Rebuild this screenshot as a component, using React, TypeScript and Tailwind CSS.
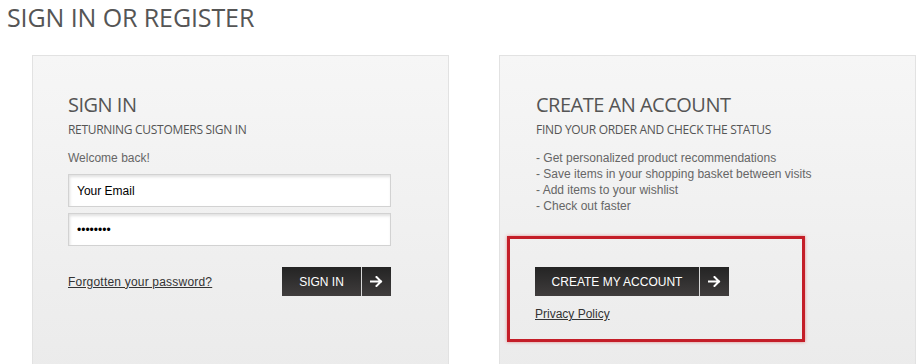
const BENEFITS = [
  "Get personalized product recommendations",
  "Save items in your shopping basket between visits",
  "Add items to your wishlist",
  "Check out faster",
];

function Arrow() {
  return (
    <svg className="w-[13px] h-[11px]" viewBox="0 0 13 11" fill="none">
      <path
        d="M1 5.5h10M6.5 1l4.5 4.5L6.5 10"
        stroke="white"
        strokeWidth={2}
        strokeLinecap="square"
      />
    </svg>
  );
}

function DarkButton({ label, width }: { label: string; width: string }) {
  return (
    <button
      className={`flex h-[29px] items-stretch bg-gradient-to-b from-[#242424] to-[#403d3d] text-white ${width}`}
    >
      <span className="flex flex-1 items-center justify-center text-[12px] font-['Liberation_Sans',Arial,sans-serif]">
        {label}
      </span>
      <span className="w-px bg-[#d8d8d8]" />
      <span className="flex w-[29px] items-center justify-center">
        <Arrow />
      </span>
    </button>
  );
}

function Field({ value }: { value: string }) {
  return (
    <div className="h-[33px] w-[323px] border border-[#d2d2d2] bg-white pl-[8px] flex items-center shadow-[inset_1px_2px_3px_rgba(0,0,0,0.12)] text-[12px] text-black font-['Liberation_Sans',Arial,sans-serif]">
      {value}
    </div>
  );
}

export default function App() {
  return (
    <div className="min-h-screen h-[364px] overflow-hidden bg-white font-['Open_Sans',sans-serif]">
      <h1 className="pl-[7px] pt-[2px] text-[25px] leading-[30px] tracking-[-0.1px] text-[#555]">
        SIGN IN OR REGISTER
      </h1>

      <div className="mt-[23px] flex gap-[50px] pl-[32px]">
        {/* Sign in */}
        <section className="h-[320px] w-[417px] border border-[#e2e2e2] bg-gradient-to-b from-[#f6f6f6] to-[#ebebeb] pl-[35px] pt-[36px]">
          <h2 className="text-[20px] leading-[26px] tracking-[-0.5px] text-[#555]">SIGN IN</h2>
          <p className="mt-[4px] text-[12px] leading-[16px] tracking-[-0.3px] text-[#555]">
            RETURNING CUSTOMERS SIGN IN
          </p>
          <p className="mt-[12px] text-[12px] leading-[16px] text-[#666] font-['Liberation_Sans',Arial,sans-serif]">
            Welcome back!
          </p>
          <div className="mt-[8px] flex flex-col gap-[6px]">
            <Field value="Your Email" />
            <Field value="••••••••" />
          </div>
          <div className="mt-[21px] flex w-[323px] items-center justify-between">
            <a className="text-[12px] tracking-[0.2px] text-[#333] underline font-['Liberation_Sans',Arial,sans-serif]">
              Forgotten your password?
            </a>
            <DarkButton label="SIGN IN" width="w-[109px]" />
          </div>
        </section>

        {/* Create account */}
        <section className="h-[320px] w-[417px] border border-[#e2e2e2] bg-gradient-to-b from-[#f6f6f6] to-[#ebebeb] pl-[7px] pt-[36px]">
          <div className="pl-[29px]">
            <h2 className="text-[20px] leading-[26px] tracking-[-0.5px] text-[#555]">CREATE AN ACCOUNT</h2>
            <p className="mt-[4px] text-[12px] leading-[16px] tracking-[-0.3px] text-[#555]">
              FIND YOUR ORDER AND CHECK THE STATUS
            </p>
            <ul className="mt-[12px] text-[12px] leading-[16px] text-[#666] font-['Liberation_Sans',Arial,sans-serif]">
              {BENEFITS.map((b) => (
                <li key={b}>- {b}</li>
              ))}
            </ul>
          </div>
          <div className="mt-[22px] h-[106px] w-[298px] border-[3px] border-[#c41e28] pl-[25px] pt-[28px] shadow-[0_0_3px_rgba(220,40,40,0.5)]">
            <DarkButton label="CREATE MY ACCOUNT" width="w-[194px]" />
            <a className="mt-[9px] block text-[12px] text-[#333] underline font-['Liberation_Sans',Arial,sans-serif]">
              Privacy Policy
            </a>
          </div>
        </section>
      </div>
    </div>
  );
}
